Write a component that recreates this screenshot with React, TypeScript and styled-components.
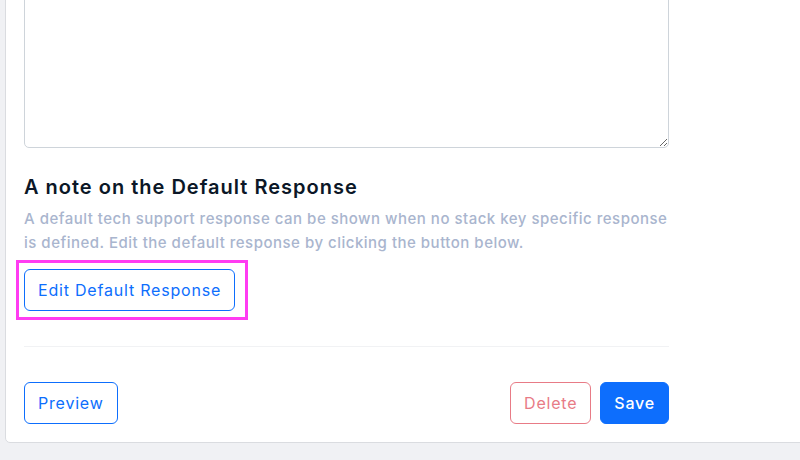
import React from "react";
import styled, { createGlobalStyle } from "styled-components";

const Global = createGlobalStyle`
  html, body { margin: 0; padding: 0; }
  body {
    background: #f0f1f4;
    font-family: Inter, "Noto Sans", sans-serif;
    overflow: hidden;
    width: 800px;
    height: 460px;
  }
`;

const Page = styled.div`
  padding-left: 5px;
`;

const Card = styled.section`
  margin-top: -60px;
  width: 840px;
  background: #fff;
  border: 1px solid #dadce0;
  border-radius: 5px;
  padding: 20px 19px 18px 18px;
  box-sizing: border-box;
`;

const Content = styled.div`
  width: 645px;
  display: flex;
  flex-direction: column;
`;

const TextArea = styled.textarea`
  display: block;
  width: 645px;
  height: 187px;
  box-sizing: border-box;
  border: 1px solid #ced4da;
  border-radius: 5px;
  resize: vertical;
  font-family: inherit;
`;

const Heading = styled.h3`
  margin: 25px 0 0;
  font-size: 20px;
  line-height: 28px;
  font-weight: 600;
  color: #0b1727;
  letter-spacing: 1px;
`;

const Description = styled.p`
  margin: 6px 0 0;
  font-size: 15px;
  line-height: 24px;
  font-weight: 500;
  color: #a9b5ce;
  letter-spacing: 0.5px;
`;

const Button = styled.button<{ $variant: "outline" | "danger" | "primary" }>`
  height: 42px;
  box-sizing: border-box;
  padding: 0 13px;
  border-radius: 6px;
  font-family: inherit;
  font-size: 16px;
  letter-spacing: 0.8px;
  font-weight: ${(p) => (p.$variant === "primary" ? 500 : 400)};
  cursor: pointer;
  border: 1px solid
    ${(p) => (p.$variant === "danger" ? "#e87b86" : "#0d6efd")};
  background: ${(p) => (p.$variant === "primary" ? "#0d6efd" : "#fff")};
  color: ${(p) =>
    p.$variant === "primary"
      ? "#fff"
      : p.$variant === "danger"
      ? "#e87b86"
      : "#0d6efd"};
`;

const EditButton = styled(Button)`
  position: relative;
  align-self: flex-start;
  margin-top: 14px;

  &::after {
    content: "";
    position: absolute;
    inset: -10px -14px -10px -9px;
    border: 3px solid #ff3cf2;
    pointer-events: none;
  }
`;

const Divider = styled.hr`
  margin: 35px 0 0;
  border: 0;
  border-top: 1px solid #f1f2f4;
`;

const Footer = styled.div`
  margin-top: 35px;
  display: flex;
  align-items: center;
  gap: 9px;
`;

const Spacer = styled.div`
  flex: 1;
`;

export default function App() {
  return (
    <Page>
      <Global />
      <Card>
        <Content>
          <TextArea />
          <Heading>A note on the Default Response</Heading>
          <Description>
            A default tech support response can be shown when no stack key specific response
            is defined. Edit the default response by clicking the button below.
          </Description>
          <EditButton $variant="outline">Edit Default Response</EditButton>
          <Divider />
          <Footer>
            <Button $variant="outline">Preview</Button>
            <Spacer />
            <Button $variant="danger">Delete</Button>
            <Button $variant="primary">Save</Button>
          </Footer>
        </Content>
      </Card>
    </Page>
  );
}
